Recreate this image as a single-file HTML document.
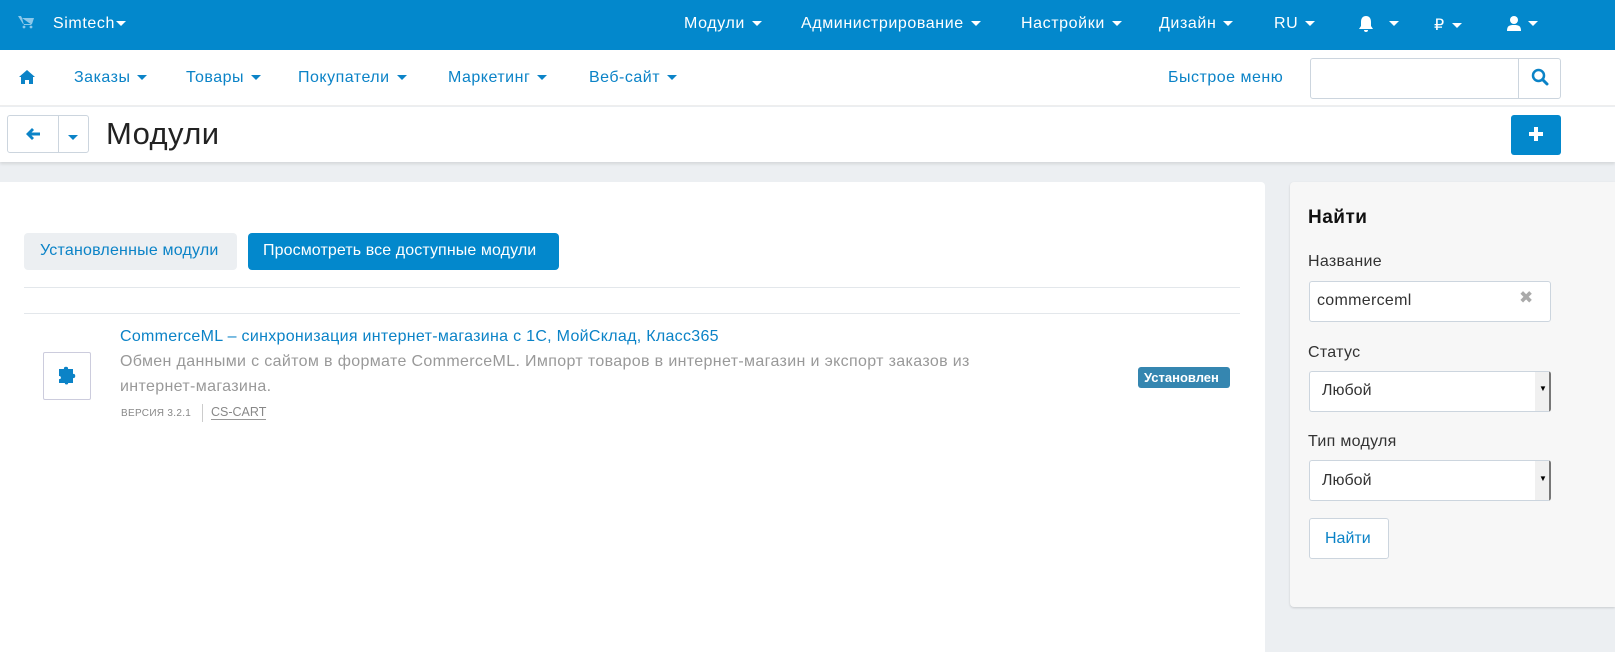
<!DOCTYPE html>
<html><head><meta charset="utf-8"><style>
*{box-sizing:border-box;margin:0;padding:0}
body{width:1615px;height:645px;overflow:hidden;background:#eceff2;font-family:"Liberation Sans","DejaVu Sans",sans-serif;position:relative}
.a{position:absolute;white-space:nowrap}
.top{position:absolute;left:0;top:0;width:1615px;height:50px;background:#0388cc}
.top .a{color:#fff;font-size:16px;top:15px;letter-spacing:.6px}
.car{display:inline-block;width:0;height:0;border-left:5px solid transparent;border-right:5px solid transparent;border-top:5px solid currentColor;vertical-align:middle;margin-left:7px}
.nav{position:absolute;left:0;top:50px;width:1615px;height:56px;background:#fff;border-bottom:1px solid #eee}
.nav .a{color:#0b83c7;font-size:16px;top:19px;letter-spacing:.5px}
.hdr{position:absolute;left:0;top:107px;width:1615px;height:55px;background:#fff;box-shadow:0 2px 3px rgba(0,0,0,.1)}
.main{position:absolute;left:0;top:182px;width:1265px;height:470px;background:#fff;border-radius:0 4px 0 0}
.side{position:absolute;left:1290px;top:182px;width:325px;height:425px;background:#f7f7f7;border-radius:4px 0 0 4px;box-shadow:0 1px 2px rgba(0,0,0,.15)}
.inp{position:absolute;background:#fff;border:1px solid #ccd5de;border-radius:3px}
.lbl{position:absolute;font-size:16px;color:#333;letter-spacing:.3px}
</style></head><body>
<div class="top">
<svg class="a" style="left:18px;top:15px" width="16" height="14" viewBox="0 0 16 14"><path d="M0 1h3l1 2h12l-2 6H5z M4 3l2 7h8" fill="#8cc8ea"/><circle cx="6" cy="12" r="1.4" fill="#8cc8ea"/><circle cx="13" cy="12" r="1.4" fill="#8cc8ea"/></svg>
<span class="a" style="left:53px">Simtech<span class="car" style="margin-left:1px"></span></span>
<span class="a" style="left:684px">Модули<span class="car"></span></span>
<span class="a" style="left:801px">Администрирование<span class="car"></span></span>
<span class="a" style="left:1021px">Настройки<span class="car"></span></span>
<span class="a" style="left:1159px">Дизайн<span class="car"></span></span>
<span class="a" style="left:1274px">RU<span class="car"></span></span>
<svg class="a" style="left:1357px;top:15px" width="18" height="18" viewBox="0 0 18 18"><path d="M9 1c3 0 5 2 5 6v4l2 3H2l2-3V7c0-4 2-6 5-6zM7 15h4c0 1.5-1 2-2 2s-2-.5-2-2z" fill="#fff"/></svg>
<span class="a" style="left:1382px"><span class="car"></span></span>
<span class="a" style="left:1434px">₽<span class="car"></span></span>
<svg class="a" style="left:1506px;top:15px" width="16" height="17" viewBox="0 0 16 17"><circle cx="8" cy="5" r="4" fill="#fff"/><path d="M1 16c0-5 2-6 7-6s7 1 7 6z" fill="#fff"/></svg>
<span class="a" style="left:1521px"><span class="car"></span></span>
</div>
<div class="nav">
<svg class="a" style="left:19px;top:20px" width="16" height="14" viewBox="0 0 16 14"><path d="M8 0l8 7h-2v7h-4v-4H6v4H2V7H0z" fill="#0b83c7"/></svg>
<span class="a" style="left:74px">Заказы<span class="car"></span></span>
<span class="a" style="left:186px">Товары<span class="car"></span></span>
<span class="a" style="left:298px">Покупатели<span class="car"></span></span>
<span class="a" style="left:448px">Маркетинг<span class="car"></span></span>
<span class="a" style="left:589px">Веб-сайт<span class="car"></span></span>
<span class="a" style="left:1168px">Быстрое меню</span>
<div class="inp" style="left:1310px;top:8px;width:251px;height:41px"></div>
<div class="a" style="left:1518px;top:9px;width:1px;height:39px;background:#ccd5de"></div>
<svg class="a" style="left:1531px;top:18px" width="18" height="18" viewBox="0 0 18 18"><circle cx="7.5" cy="7.5" r="5.5" fill="none" stroke="#0b83c7" stroke-width="2.5"/><path d="M11.5 11.5l4.5 4.5" stroke="#0b83c7" stroke-width="3" stroke-linecap="round"/></svg>
</div>
<div class="hdr">
<div class="inp" style="left:7px;top:8px;width:82px;height:38px"></div>
<div class="a" style="left:58px;top:9px;width:1px;height:36px;background:#ccd5de"></div>
<svg class="a" style="left:25px;top:20px" width="16" height="14" viewBox="0 0 16 14"><path d="M1 7l6-6 2 2-2.5 2.5H15v3H6.5L9 11l-2 2z" fill="#0b83c7"/></svg>
<span class="a" style="left:68px;top:21px;color:#0b83c7;font-size:15px"><span class="car" style="margin:0"></span></span>
<span class="a" style="left:106px;top:9px;font-size:31px;color:#222;letter-spacing:.4px">Модули</span>
<div class="a" style="left:1511px;top:8px;width:50px;height:40px;background:#0388cc;border-radius:3px"></div>
<svg class="a" style="left:1528px;top:19px" width="16" height="16" viewBox="0 0 16 16"><path d="M6 1h4v5h5v4h-5v5H6v-5H1V6h5z" fill="#fff"/></svg>
</div>
<div class="main">
<div class="a" style="left:24px;top:51px;width:213px;height:37px;background:#eceff2;border-radius:4px;color:#0b83c7;font-size:16px;padding:9px 16px;letter-spacing:.2px">Установленные модули</div>
<div class="a" style="left:248px;top:51px;width:311px;height:37px;background:#0388cc;border-radius:4px;color:#fff;font-size:16px;padding:9px 15px;letter-spacing:.1px">Просмотреть все доступные модули</div>
<div class="a" style="left:24px;top:105px;width:1216px;height:1px;background:#e3e7eb"></div>
<div class="a" style="left:24px;top:131px;width:1216px;height:1px;background:#e3e7eb"></div>
<div class="a" style="left:43px;top:170px;width:48px;height:48px;border:1px solid #ccd;border-radius:2px"></div>
<svg class="a" style="left:56px;top:183px" width="24" height="22" viewBox="0 0 24 22"><path d="M3 4h5c-1-3 5-3 4 0h5v5c3-1 3 5 0 4v5h-5c1 2-4 2-3 0H3v-4c2 1 3-3 0-3z" fill="#0b83c7"/></svg>
<span class="a" style="left:120px;top:146px;font-size:16px;color:#0b83c7;letter-spacing:.3px">CommerceML – синхронизация интернет-магазина с 1С, МойСклад, Класс365</span>
<span class="a" style="left:120px;top:171px;font-size:16px;color:#999;letter-spacing:.35px">Обмен данными с сайтом в формате CommerceML. Импорт товаров в интернет-магазин и экспорт заказов из</span>
<span class="a" style="left:120px;top:196px;font-size:16px;color:#999;letter-spacing:.35px">интернет-магазина.</span>
<span class="a" style="left:121px;top:226px;font-size:10px;color:#888;letter-spacing:.3px">ВЕРСИЯ 3.2.1</span>
<div class="a" style="left:202px;top:222px;width:1px;height:18px;background:#ccc"></div>
<span class="a" style="left:211px;top:223px;font-size:12.5px;color:#888;border-bottom:1px solid #999">CS-CART</span>
<div class="a" style="left:1138px;top:185px;width:92px;height:21px;background:#3586b0;border-radius:3px;color:#fff;font-size:13px;font-weight:bold;padding:3px 6px">Установлен</div>
</div>
<div class="side">
<span class="a" style="left:18px;top:25px;font-size:19px;font-weight:bold;color:#111;letter-spacing:.5px">Найти</span>
<span class="lbl" style="left:18px;top:71px">Название</span>
<div class="inp" style="left:19px;top:99px;width:242px;height:41px"></div>
<span class="a" style="left:27px;top:110px;font-size:16px;color:#333;letter-spacing:.3px">commerceml</span>
<span class="a" style="left:229px;top:106px;font-size:17px;color:#aaa;font-weight:bold">✖</span>
<span class="lbl" style="left:18px;top:162px">Статус</span>
<div class="inp" style="left:19px;top:189px;width:242px;height:41px;border-right:2px solid #777"></div>
<div class="a" style="left:245px;top:190px;width:14px;height:39px;background:#f0f0f0"></div>
<span class="a" style="left:32px;top:200px;font-size:16px;color:#333">Любой</span>
<span class="a" style="left:249px;top:202px;font-size:8px;color:#000">▼</span>
<span class="lbl" style="left:18px;top:251px">Тип модуля</span>
<div class="inp" style="left:19px;top:278px;width:242px;height:41px;border-right:2px solid #777"></div>
<div class="a" style="left:245px;top:279px;width:14px;height:39px;background:#f0f0f0"></div>
<span class="a" style="left:32px;top:290px;font-size:16px;color:#333">Любой</span>
<span class="a" style="left:249px;top:292px;font-size:8px;color:#000">▼</span>
<div class="inp" style="left:19px;top:336px;width:80px;height:41px"></div>
<span class="a" style="left:35px;top:348px;font-size:16px;color:#0b83c7">Найти</span>
</div>
</body></html>
